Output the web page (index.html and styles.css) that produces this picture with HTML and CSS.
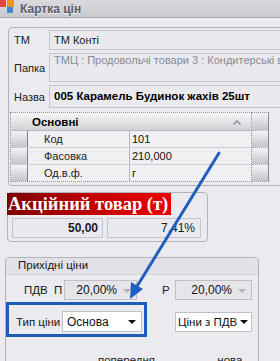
FILE: index.html
```html
<!DOCTYPE html>
<html lang="uk">

<head>
  <meta charset="UTF-8">
  <meta name="viewport" content="width=device-width, initial-scale=1.0">
  <title>Картка цін</title>
  <link rel="stylesheet" href="styles.css">
</head>

<body>
  <div class="window">
    <!-- заголовок вікна -->
    <div class="titlebar">
      <svg class="logo" width="15" height="14" viewBox="0 0 15 14">
        <rect x="0" y="0" width="6" height="7" fill="#e8473c"></rect>
        <rect x="7" y="0" width="7" height="7" fill="#f6921e"></rect>
        <rect x="7" y="7" width="6" height="6" fill="#3f86d6"></rect>
      </svg>
      <span class="title">Картка цін</span>
    </div>
    <div class="strip"></div>

    <!-- основна інформація -->
    <div class="group main-group">
      <div class="field-row">
        <label class="field-label">ТМ</label>
        <div class="edit edit-tm">ТМ Конті</div>
      </div>
      <div class="field-row">
        <label class="field-label">Папка</label>
        <div class="edit edit-memo">ТМЦ : Продовольчі товари 3 : Кондитерські вироби</div>
      </div>
      <div class="field-row">
        <label class="field-label">Назва</label>
        <div class="edit edit-name">005 Карамель Будинок жахів 25шт</div>
      </div>

      <div class="vgrid">
        <div class="vgrid-main">
          <div class="vgrid-header">
            <span class="vgrid-ind"></span>
            <span class="vgrid-title">Основні</span>
            <svg class="chevron" width="8" height="5" viewBox="0 0 8 5">
              <path d="M0.5 4.5 L4 1 L7.5 4.5" fill="none" stroke="#8a8a96" stroke-width="1.4"></path>
            </svg>
          </div>
          <div class="vgrid-row">
            <span class="vgrid-ind"></span>
            <span class="vgrid-name">Код</span>
            <span class="vgrid-value">101</span>
          </div>
          <div class="vgrid-row">
            <span class="vgrid-ind"></span>
            <span class="vgrid-name">Фасовка</span>
            <span class="vgrid-value">210,000</span>
          </div>
          <div class="vgrid-row">
            <span class="vgrid-ind"></span>
            <span class="vgrid-name">Од.в.ф.</span>
            <span class="vgrid-value">г</span>
          </div>
        </div>
        <div class="vgrid-side">
          <span class="side-cell side-head"></span>
          <span class="side-cell"></span>
          <span class="side-cell"></span>
          <span class="side-cell"></span>
        </div>
      </div>
    </div>

    <!-- акція -->
    <div class="group promo-group">
      <div class="promo-banner">Акційний товар (т)</div>
      <div class="promo-values">
        <div class="edit edit-price">50,00</div>
        <div class="edit edit-percent">7,41%</div>
      </div>
    </div>

    <!-- прихідні ціни -->
    <div class="group income-group">
      <div class="group-header">Прихідні ціни</div>
      <div class="income-row">
        <span class="income-label label-vat">ПДВ&nbsp;&nbsp;П</span>
        <div class="combo combo-disabled combo-vat">
          <span class="combo-text">20,00%</span>
          <span class="combo-arrow"></span>
        </div>
        <span class="income-label label-r">Р</span>
        <div class="combo combo-disabled combo-right">
          <span class="combo-text">20,00%</span>
          <span class="combo-arrow"></span>
        </div>
      </div>
      <div class="income-row row-type">
        <span class="income-label label-type">Тип ціни</span>
        <div class="combo combo-type">
          <span class="combo-text">Основа</span>
          <span class="combo-arrow"></span>
        </div>
        <div class="combo combo-right combo-mode">
          <span class="combo-text">Ціни з ПДВ</span>
          <span class="combo-arrow"></span>
        </div>
      </div>
      <div class="columns-head">
        <span class="col-prev">попередня</span>
        <span class="col-new">нова</span>
      </div>
    </div>

    <!-- позначка поверх форми -->
    <div class="highlight-box"></div>
    <svg class="pointer" width="280" height="361" viewBox="0 0 280 361">
      <line x1="219" y1="153" x2="136" y2="288" stroke="#1f5fbf" stroke-width="3" stroke-linecap="round"></line>
      <polygon points="130,299 131,282 143,289" fill="#1f5fbf"></polygon>
    </svg>
  </div>
</body>

</html>
```

FILE: styles.css
```css
* {
  box-sizing: border-box;
}

body {
  margin: 0;
  background: #eaeaef;
  font-family: 'Liberation Sans', Arial, sans-serif;
  font-size: 11px;
  color: #1a1a1a;
}

.window {
  position: relative;
  width: 280px;
  height: 361px;
  overflow: hidden;
}

.titlebar {
  height: 18px;
  display: flex;
  align-items: flex-start;
  background: linear-gradient(#d9d9de, #c9c9ce);
  border-bottom: 1px solid #a3a3ab;
}

.logo {
  flex: none;
}

.title {
  margin-left: 5px;
  margin-top: 2px;
  font-size: 12px;
  font-weight: bold;
  color: #5c5c66;
  text-shadow: 0 1px 0 #f2f2f4;
}

.strip {
  height: 9px;
}

.group {
  border: 1px solid #b3b3bc;
  border-radius: 4px;
  background: #eaeaef;
}

/* основна група */
.main-group {
  margin-left: 8px;
  width: 300px;
  padding: 2px 0 3px 0;
}

.field-row {
  display: flex;
  align-items: center;
  margin-bottom: 3px;
}

.field-label {
  width: 40px;
  padding-left: 5px;
  flex: none;
}

.edit {
  border: 1px solid #c4c4cc;
  background: #e9e9ee;
  padding: 0 4px;
  white-space: nowrap;
  overflow: hidden;
}

.edit-tm,
.edit-memo,
.edit-name {
  flex: 1;
}

.edit-tm {
  height: 20px;
  line-height: 18px;
}

.edit-memo {
  height: 29px;
  line-height: 12px;
  color: #8a8a92;
}

.edit-name {
  height: 23px;
  line-height: 21px;
  font-weight: bold;
  font-size: 11.5px;
  color: #000;
}

/* сітка властивостей */
.vgrid {
  display: flex;
  margin: 4px 0 0 1px;
}

.vgrid-main {
  width: 242px;
  border: 1px dotted #8e8ea4;
  background: #f0f0f2;
}

.vgrid-header {
  position: relative;
  height: 18px;
  display: flex;
  align-items: center;
  background: linear-gradient(#f7f7f8, #d3d3d7);
  border-bottom: 1px solid #b8b8c4;
}

.vgrid-header .vgrid-ind {
  background: none;
  border: none;
}

.vgrid-title {
  margin-left: 4px;
  font-weight: bold;
  font-size: 11.5px;
  color: #000;
}

.chevron {
  position: absolute;
  right: 10px;
  top: 7px;
}

.vgrid-row {
  height: 17px;
  display: flex;
  align-items: center;
  border-bottom: 1px solid #cfcfdc;
}

.vgrid-row:last-child {
  border-bottom: none;
  height: 16px;
}

.vgrid-ind {
  width: 17px;
  height: 100%;
  flex: none;
  background: linear-gradient(#f3f3f4, #c6c6ca);
  border-right: 1px solid #7e7e98;
}

.vgrid-name {
  width: 102px;
  height: 100%;
  padding-left: 16px;
  line-height: 16px;
  border-right: 1px solid #b3b3c2;
  color: #222;
}

.vgrid-value {
  padding-left: 2px;
  color: #111;
}

.vgrid-side {
  width: 17px;
  display: flex;
  flex-direction: column;
  border-top: 1px dotted #8e8ea4;
  border-bottom: 1px dotted #8e8ea4;
  border-right: 1px solid #8a8a96;
}

.side-cell {
  height: 17px;
  background: linear-gradient(#f3f3f4, #c6c6ca);
  border-bottom: 1px dotted #a6a6b6;
}

.side-head {
  height: 18px;
}

.side-cell:last-child {
  border-bottom: none;
  height: 16px;
}

/* акційний блок */
.promo-group {
  margin: 6px 0 0 7px;
  width: 201px;
  height: 50px;
}

.promo-banner {
  width: 164px;
  height: 22px;
  margin-left: -1px;
  padding-left: 1px;
  background: linear-gradient(90deg, #7e0000, #c40000 55%, #ee0000);
  color: #fff;
  font-family: 'Liberation Serif', 'Times New Roman', serif;
  font-weight: bold;
  font-size: 18.5px;
  line-height: 22px;
  white-space: nowrap;
  overflow: hidden;
}

.promo-values {
  display: flex;
  gap: 4px;
  margin: 3px 0 0 4px;
}

.edit-price,
.edit-percent {
  height: 20px;
  line-height: 18px;
  text-align: right;
  font-size: 12px;
}

.edit-price {
  width: 91px;
  font-weight: bold;
}

.edit-percent {
  width: 94px;
  padding-right: 5px;
}

/* прихідні ціни */
.income-group {
  margin: 15px 0 0 5px;
  width: 254px;
  height: 120px;
}

.group-header {
  height: 17px;
  line-height: 15px;
  padding-left: 12px;
  font-size: 11.5px;
  background: #e1e1e7;
  border-bottom: 1px solid #d2d2da;
  border-radius: 4px 4px 0 0;
}

.income-row {
  display: flex;
  align-items: center;
  margin-top: 5px;
}

.row-type {
  margin-top: 11px;
}

.income-label {
  flex: none;
  font-size: 11.5px;
}

.label-vat {
  margin-left: 18px;
  width: 40px;
}

.label-r {
  margin-left: 25px;
  width: 13px;
}

.label-type {
  margin-left: 10px;
  width: 46px;
}

.combo {
  display: flex;
  align-items: center;
  height: 20px;
  border: 1px solid #c0c0c8;
  background: #fff;
  font-size: 12px;
  color: #111;
}

.combo-text {
  flex: 1;
  white-space: nowrap;
}

.combo-arrow {
  flex: none;
  width: 0;
  height: 0;
  margin: 1px 5px 0 3px;
  border-left: 4px solid transparent;
  border-right: 4px solid transparent;
  border-top: 4px solid #111;
}

.combo-disabled {
  background: #e5e5ea;
}

.combo-disabled .combo-text {
  text-align: right;
  padding-right: 3px;
}

.combo-disabled .combo-arrow {
  border-top-color: #b4b4bc;
}

.combo-vat {
  width: 73px;
}

.combo-right {
  width: 77px;
}

.combo-type {
  width: 80px;
  height: 21px;
  padding-left: 4px;
}

.combo-mode {
  margin-left: 33px;
  padding-left: 2px;
  font-size: 11.5px;
}

.columns-head {
  margin-top: 22px;
  font-size: 11.5px;
}

.col-prev {
  margin-left: 92px;
}

.col-new {
  margin-left: 59px;
}

/* позначка */
.highlight-box {
  position: absolute;
  left: 6px;
  top: 302px;
  width: 141px;
  height: 35px;
  border: 3px solid #1d5cb8;
}

.pointer {
  position: absolute;
  left: 0;
  top: 0;
  pointer-events: none;
}
```
